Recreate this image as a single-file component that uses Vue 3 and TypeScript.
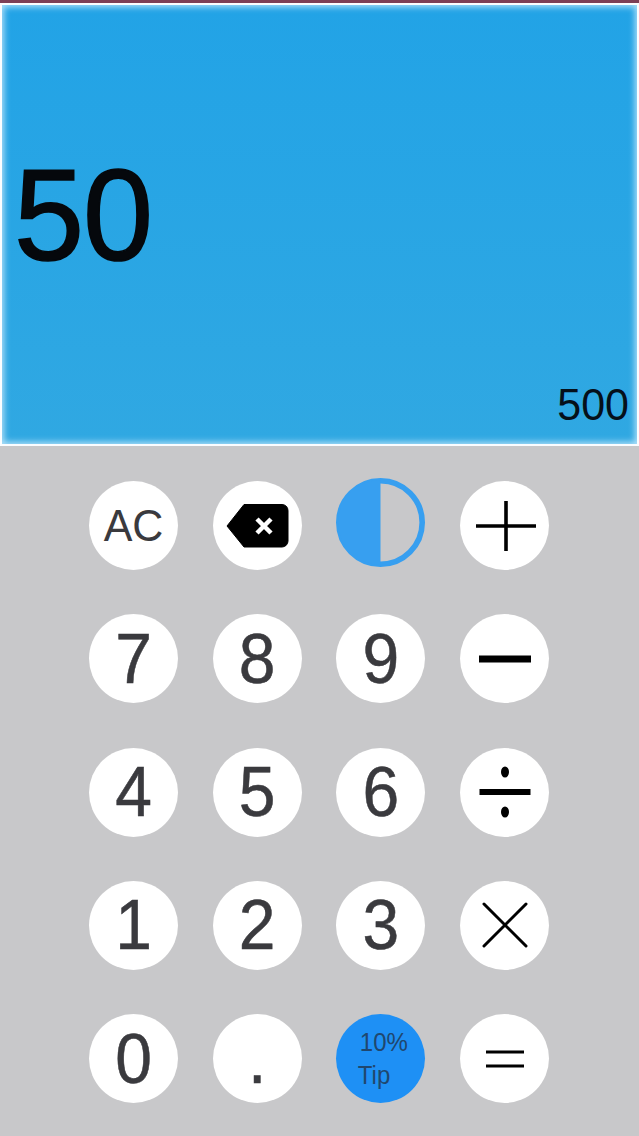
<script setup lang="ts">
interface Key {
  id: string;
  label?: string;
  kind: 'digit' | 'icon' | 'tip';
}

const keys: Key[] = [
  { id: 'ac', label: 'AC', kind: 'digit' },
  { id: 'back', kind: 'icon' },
  { id: 'theme', kind: 'icon' },
  { id: 'plus', kind: 'icon' },
  { id: '7', label: '7', kind: 'digit' },
  { id: '8', label: '8', kind: 'digit' },
  { id: '9', label: '9', kind: 'digit' },
  { id: 'minus', kind: 'icon' },
  { id: '4', label: '4', kind: 'digit' },
  { id: '5', label: '5', kind: 'digit' },
  { id: '6', label: '6', kind: 'digit' },
  { id: 'divide', kind: 'icon' },
  { id: '1', label: '1', kind: 'digit' },
  { id: '2', label: '2', kind: 'digit' },
  { id: '3', label: '3', kind: 'digit' },
  { id: 'times', kind: 'icon' },
  { id: '0', label: '0', kind: 'digit' },
  { id: 'dot', label: '.', kind: 'digit' },
  { id: 'tip', kind: 'tip' },
  { id: 'equals', kind: 'icon' }
];
</script>

<template>
  <div class="calc">
    <div class="screen">
      <div class="current">50</div>
      <div class="previous">500</div>
    </div>
    <div class="pad">
      <div
        v-for="key in keys"
        :key="key.id"
        class="key"
        :class="[`key-${key.id}`, { 'key-tip': key.kind === 'tip' }]"
      >
        <span v-if="key.kind === 'digit'" class="label">{{ key.label }}</span>
        <span v-else-if="key.kind === 'tip'" class="tip-label"><span class="tip-pct">10%</span><br />Tip</span>

        <svg v-else-if="key.id === 'back'" width="64" height="46" viewBox="0 0 64 46">
          <path d="M19 1.500H57a6 6 0 0 1 6 6V38a6 6 0 0 1-6 6H19L2 23Z" fill="#000" stroke="#000" stroke-linejoin="round" />
          <path d="M32 16L46 30M46 16L32 30" stroke="#fff" stroke-width="4.500" fill="none" />
        </svg>
        <svg v-else-if="key.id === 'theme'" class="theme-icon" width="89" height="89" viewBox="0 0 89 89">
          <circle cx="44.500" cy="44.500" r="41.700" fill="none" stroke="#379ff0" stroke-width="5.600" />
          <path d="M44.500 2a42.500 42.500 0 0 0 0 85Z" fill="#379ff0" />
        </svg>
        <svg v-else-if="key.id === 'plus'" class="plus-icon" width="62" height="52" viewBox="0 0 62 52">
          <path d="M1 26H61M31 1V51" stroke="#000" stroke-width="3.600" fill="none" />
        </svg>
        <svg v-else-if="key.id === 'minus'" width="54" height="8" viewBox="0 0 54 8">
          <rect x="1" y="0.500" width="52" height="7" fill="#000" />
        </svg>
        <svg v-else-if="key.id === 'divide'" width="52" height="56" viewBox="0 0 52 56">
          <ellipse cx="26" cy="8" rx="4" ry="5.500" fill="#000" />
          <rect x="0.500" y="25" width="51" height="6" fill="#000" />
          <ellipse cx="26" cy="48" rx="4" ry="5.500" fill="#000" />
        </svg>
        <svg v-else-if="key.id === 'times'" width="46" height="46" viewBox="0 0 46 46">
          <path d="M2 2L44 44M44 2L2 44" stroke="#000" stroke-width="3" stroke-linecap="round" fill="none" />
        </svg>
        <svg v-else-if="key.id === 'equals'" width="40" height="20" viewBox="0 0 40 20">
          <path d="M1 3H39M1 17H39" stroke="#000" stroke-width="3" fill="none" />
        </svg>
      </div>
    </div>
  </div>
</template>

<style>
html,
body {
  margin: 0;
  background: #c8c8ca;
}
</style>

<style scoped>
.calc {
  width: 639px;
  height: 1136px;
  overflow: hidden;
  display: flex;
  flex-direction: column;
  background: #c8c8ca;
  border-top: 3px solid #7d3f56;
  box-sizing: border-box;
  font-family: "Liberation Sans", Arial, sans-serif;
}

.screen {
  height: 443px;
  flex: none;
  box-sizing: border-box;
  position: relative;
  display: flex;
  align-items: center;
  padding: 0 0 17px 12px;
  background: linear-gradient(180deg, #22a3e6 0%, #30a8e2 100%);
  border: 2px solid #fbfdff;
  box-shadow: inset 0 0 6px 2px rgba(185, 228, 250, 0.95);
}

.current {
  font-size: 126px;
  line-height: 1;
  letter-spacing: -1px;
  color: #05080c;
  transform: scaleY(1.03);
  -webkit-text-stroke: 1.500px #05080c;
}

.previous {
  position: absolute;
  right: 8px;
  bottom: 17px;
  font-size: 43px;
  line-height: 1;
  color: #05101a;
  transform: scaleY(1.03);
}

.pad {
  flex: 1;
  display: grid;
  grid-template-columns: repeat(4, 89px);
  grid-auto-rows: 89px;
  column-gap: 34.700px;
  row-gap: 44.300px;
  padding: 35px 0 0 89px;
}

.key {
  width: 89px;
  height: 89px;
  border-radius: 50%;
  background: #fff;
  display: flex;
  align-items: center;
  justify-content: center;
  color: #3a3a3e;
}

.label {
  font-size: 66px;
  line-height: 1;
  transform: translateY(-1px) scaleY(1.08);
  -webkit-text-stroke: 0.500px #3a3a3e;
}

.key-ac .label {
  font-size: 43px;
  transform: scaleY(1.05);
  -webkit-text-stroke: 0;
}

.key-theme {
  background: transparent;
}

.theme-icon {
  transform: translateY(-3px);
}

.plus-icon {
  transform: translateX(1px);
}

.key-tip {
  background: #1e90f5;
}

.tip-label {
  font-size: 24px;
  line-height: 30px;
  color: #20476e;
  text-align: left;
  padding-left: 4px;
  transform: scaleY(1.1);
}

.tip-pct {
  margin-left: 2px;
}
</style>
